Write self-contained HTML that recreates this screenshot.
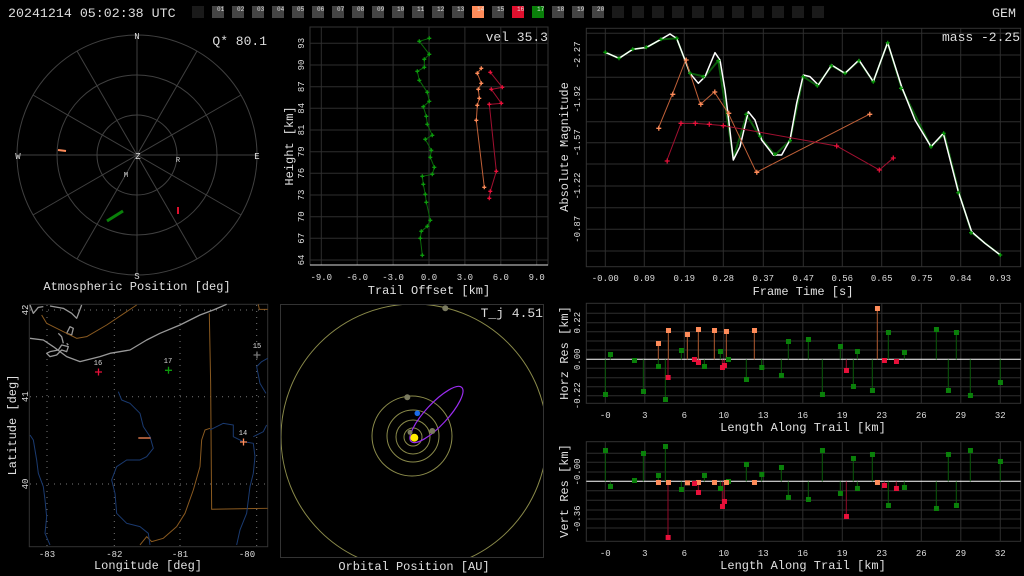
<!DOCTYPE html>
<html><head><meta charset="utf-8"><style>
html,body{margin:0;padding:0;background:#000;width:1024px;height:576px;overflow:hidden}
svg{display:block}
text{font-family:"Liberation Mono",monospace;fill:#ddd}
.t{font-size:9px;fill:#bbb}
.ti{font-size:12px;fill:#e0e0e0}
.g{stroke:#2e2e2e;stroke-width:1;fill:none}
.f{stroke:#333;stroke-width:1;fill:none}
.n *{vector-effect:non-scaling-stroke;stroke-linejoin:round}
</style></head><body>
<svg width="1024" height="576" viewBox="0 0 1024 576" xmlns="http://www.w3.org/2000/svg">
<rect width="1024" height="576" fill="#000"/>
<!-- header -->
<text x="8" y="17" style="font-size:13.3px" fill="#e0e0e0">20241214 05:02:38 UTC</text>
<text x="992" y="17" style="font-size:13.3px" fill="#e0e0e0">GEM</text>
<g>
<rect x="192" y="6" width="12" height="12" fill="#1a1a1a"/>
<rect x="212" y="6" width="12" height="12" fill="#444"/><rect x="232" y="6" width="12" height="12" fill="#444"/><rect x="252" y="6" width="12" height="12" fill="#444"/><rect x="272" y="6" width="12" height="12" fill="#444"/><rect x="292" y="6" width="12" height="12" fill="#444"/><rect x="312" y="6" width="12" height="12" fill="#444"/><rect x="332" y="6" width="12" height="12" fill="#444"/><rect x="352" y="6" width="12" height="12" fill="#444"/><rect x="372" y="6" width="12" height="12" fill="#444"/><rect x="392" y="6" width="12" height="12" fill="#444"/><rect x="412" y="6" width="12" height="12" fill="#444"/><rect x="432" y="6" width="12" height="12" fill="#444"/><rect x="452" y="6" width="12" height="12" fill="#444"/>
<rect x="472" y="6" width="12" height="12" fill="#ff8c5a"/>
<rect x="492" y="6" width="12" height="12" fill="#444"/>
<rect x="512" y="6" width="12" height="12" fill="#e0102e"/>
<rect x="532" y="6" width="12" height="12" fill="#0a800a"/>
<rect x="552" y="6" width="12" height="12" fill="#444"/><rect x="572" y="6" width="12" height="12" fill="#444"/><rect x="592" y="6" width="12" height="12" fill="#444"/>
<rect x="612" y="6" width="12" height="12" fill="#1a1a1a"/><rect x="632" y="6" width="12" height="12" fill="#1a1a1a"/><rect x="652" y="6" width="12" height="12" fill="#1a1a1a"/><rect x="672" y="6" width="12" height="12" fill="#1a1a1a"/><rect x="692" y="6" width="12" height="12" fill="#1a1a1a"/><rect x="712" y="6" width="12" height="12" fill="#1a1a1a"/><rect x="732" y="6" width="12" height="12" fill="#1a1a1a"/><rect x="752" y="6" width="12" height="12" fill="#1a1a1a"/><rect x="772" y="6" width="12" height="12" fill="#1a1a1a"/><rect x="792" y="6" width="12" height="12" fill="#1a1a1a"/><rect x="812" y="6" width="12" height="12" fill="#1a1a1a"/>
</g>
<g style="font-size:6px" fill="#ccc">
<text x="217" y="11">01</text><text x="237" y="11">02</text><text x="257" y="11">03</text><text x="277" y="11">04</text><text x="297" y="11">05</text><text x="317" y="11">06</text><text x="337" y="11">07</text><text x="357" y="11">08</text><text x="377" y="11">09</text><text x="397" y="11">10</text><text x="417" y="11">11</text><text x="437" y="11">12</text><text x="457" y="11">13</text><text x="477" y="11" fill="#fff">14</text><text x="497" y="11">15</text><text x="517" y="11" fill="#fff">16</text><text x="537" y="11" fill="#fff">17</text><text x="557" y="11">18</text><text x="577" y="11">19</text><text x="597" y="11">20</text>
</g>

<!-- Panel 1 polar -->
<g stroke="#404040" fill="none" stroke-width="1">
<circle cx="137" cy="155" r="40"/><circle cx="137" cy="155" r="80"/><circle cx="137" cy="155" r="120"/>
<line x1="137" y1="35" x2="137" y2="275"/><line x1="17" y1="155" x2="257" y2="155"/>
<line x1="77" y1="51" x2="197" y2="259"/><line x1="197" y1="51" x2="77" y2="259"/>
<line x1="33" y1="95" x2="241" y2="215"/><line x1="33" y1="215" x2="241" y2="95"/>
</g>
<g style="font-size:9px" fill="#ccc" text-anchor="middle">
<text x="137" y="39">N</text><text x="137" y="279">S</text><text x="18" y="159">W</text><text x="257" y="159">E</text><text x="138" y="159">Z</text>
<text x="178" y="162" style="font-size:7px" fill="#fff">R</text><text x="126" y="177" style="font-size:7px" fill="#fff">M</text>
</g>
<text x="267" y="45" text-anchor="end" style="font-size:13px" fill="#e0e0e0">Q* 80.1</text>
<line x1="58" y1="150" x2="66" y2="151" stroke="#ff8c5a" stroke-width="2"/>
<line x1="107" y1="221" x2="123" y2="211" stroke="#0a800a" stroke-width="3"/>
<line x1="178" y1="207" x2="178" y2="214" stroke="#e0102e" stroke-width="2"/>
<text x="137" y="290" text-anchor="middle" class="ti">Atmospheric Position [deg]</text>

<!-- Panel 2 trail -->
<rect x="310" y="27" width="238" height="238" fill="none" stroke="#333"/>
<g class="g">
<line x1="321.3" y1="27" x2="321.3" y2="265"/><line x1="357.2" y1="27" x2="357.2" y2="265"/><line x1="393.1" y1="27" x2="393.1" y2="265"/><line x1="429" y1="27" x2="429" y2="265"/><line x1="464.9" y1="27" x2="464.9" y2="265"/><line x1="500.8" y1="27" x2="500.8" y2="265"/><line x1="536.7" y1="27" x2="536.7" y2="265"/>
<line x1="310" y1="43.3" x2="548" y2="43.3"/><line x1="310" y1="65" x2="548" y2="65"/><line x1="310" y1="86.7" x2="548" y2="86.7"/><line x1="310" y1="108.3" x2="548" y2="108.3"/><line x1="310" y1="130" x2="548" y2="130"/><line x1="310" y1="151.7" x2="548" y2="151.7"/><line x1="310" y1="173.3" x2="548" y2="173.3"/><line x1="310" y1="195" x2="548" y2="195"/><line x1="310" y1="216.7" x2="548" y2="216.7"/><line x1="310" y1="238.3" x2="548" y2="238.3"/><line x1="310" y1="260" x2="548" y2="260"/>
</g>
<line x1="310" y1="265" x2="548" y2="265" stroke="#ddd"/>
<g class="n" transform="translate(280,20) scale(0.3333)" fill="none" stroke-width="1">
<polyline stroke="#0a6a0a" points="448,55 418,64 448,103 433,118 433,142 412,154 418,181 442,217 448,244 430,260 439,289 442,313 457,346 436,358 454,391 451,412 463,442 457,463 427,469 430,493 436,523 439,547 451,601 442,619 424,634 421,655 427,706"/>
<polyline stroke="#c06038" points="604,145 592,160 604,190 595,208 598,235 592,256 589,301 613,502"/>
<polyline stroke="#a01030" points="631,157 667,202 634,208 664,250 628,253 649,454 631,514 628,535"/>
</g>
<g stroke-width="1.3">
<path stroke="#0c9a0c" d="M427.3,38.3h4m-2,-2v4 M417.3,41.3h4m-2,-2v4 M427.3,54.3h4m-2,-2v4 M422.3,59.3h4m-2,-2v4 M422.3,67.3h4m-2,-2v4 M415.3,71.3h4m-2,-2v4 M417.3,80.3h4m-2,-2v4 M425.3,92.3h4m-2,-2v4 M427.3,101.3h4m-2,-2v4 M421.3,106.7h4m-2,-2v4 M424.3,116.3h4m-2,-2v4 M425.3,124.3h4m-2,-2v4 M430.3,135.3h4m-2,-2v4 M423.3,139.3h4m-2,-2v4 M429.3,150.3h4m-2,-2v4 M428.3,157.3h4m-2,-2v4 M432.3,167.3h4m-2,-2v4 M430.3,174.3h4m-2,-2v4 M420.3,176.3h4m-2,-2v4 M421.3,184.3h4m-2,-2v4 M423.3,194.3h4m-2,-2v4 M424.3,202.3h4m-2,-2v4 M428.3,220.3h4m-2,-2v4 M425.3,226.3h4m-2,-2v4 M419.3,231.3h4m-2,-2v4 M418.3,238.3h4m-2,-2v4 M420.3,255.3h4m-2,-2v4"/>
<path stroke="#ff8c5a" d="M479.3,68.3h4m-2,-2v4 M475.3,73.3h4m-2,-2v4 M479.3,83.3h4m-2,-2v4 M476.3,89.3h4m-2,-2v4 M477.3,98.3h4m-2,-2v4 M475.3,105.3h4m-2,-2v4 M474.3,120.3h4m-2,-2v4 M482.3,187.3h4m-2,-2v4"/>
<path stroke="#e8103a" d="M488.3,72.3h4m-2,-2v4 M500.3,87.3h4m-2,-2v4 M489.3,89.3h4m-2,-2v4 M499.3,103.3h4m-2,-2v4 M487.3,104.3h4m-2,-2v4 M494.3,171.3h4m-2,-2v4 M488.3,191.3h4m-2,-2v4 M487.3,198.3h4m-2,-2v4"/>
</g>
<text x="548" y="41" text-anchor="end" style="font-size:13px" fill="#e0e0e0">vel 35.3</text>
<g class="t" text-anchor="middle">
<text x="321.3" y="280">-9.0</text><text x="357.2" y="280">-6.0</text><text x="393.1" y="280">-3.0</text><text x="429" y="280">0.0</text><text x="464.9" y="280">3.0</text><text x="500.8" y="280">6.0</text><text x="536.7" y="280">9.0</text>
<text transform="translate(304,43.3) rotate(-90)">93</text><text transform="translate(304,65) rotate(-90)">90</text><text transform="translate(304,86.7) rotate(-90)">87</text><text transform="translate(304,108.3) rotate(-90)">84</text><text transform="translate(304,130) rotate(-90)">81</text><text transform="translate(304,151.7) rotate(-90)">79</text><text transform="translate(304,173.3) rotate(-90)">76</text><text transform="translate(304,195) rotate(-90)">73</text><text transform="translate(304,216.7) rotate(-90)">70</text><text transform="translate(304,238.3) rotate(-90)">67</text><text transform="translate(304,260) rotate(-90)">64</text>
</g>
<text x="429" y="294" text-anchor="middle" class="ti">Trail Offset [km]</text>
<text transform="translate(293,146) rotate(-90)" text-anchor="middle" class="ti">Height [km]</text>

<!-- Panel 3 magnitude -->
<rect x="586.3" y="28.3" width="434.4" height="238.4" fill="none" stroke="#333"/>
<g class="g">
<line x1="605.3" y1="28.3" x2="605.3" y2="266.7"/><line x1="644.3" y1="28.3" x2="644.3" y2="266.7"/><line x1="684.3" y1="28.3" x2="684.3" y2="266.7"/><line x1="723.3" y1="28.3" x2="723.3" y2="266.7"/><line x1="763.3" y1="28.3" x2="763.3" y2="266.7"/><line x1="803.3" y1="28.3" x2="803.3" y2="266.7"/><line x1="842.3" y1="28.3" x2="842.3" y2="266.7"/><line x1="881.7" y1="28.3" x2="881.7" y2="266.7"/><line x1="921.7" y1="28.3" x2="921.7" y2="266.7"/><line x1="960.7" y1="28.3" x2="960.7" y2="266.7"/><line x1="1000.3" y1="28.3" x2="1000.3" y2="266.7"/>
<line x1="586.3" y1="33.3" x2="1020.7" y2="33.3"/><line x1="586.3" y1="55" x2="1020.7" y2="55"/><line x1="586.3" y1="77.3" x2="1020.7" y2="77.3"/><line x1="586.3" y1="99.3" x2="1020.7" y2="99.3"/><line x1="586.3" y1="121.7" x2="1020.7" y2="121.7"/><line x1="586.3" y1="142.7" x2="1020.7" y2="142.7"/><line x1="586.3" y1="164" x2="1020.7" y2="164"/><line x1="586.3" y1="186" x2="1020.7" y2="186"/><line x1="586.3" y1="207.7" x2="1020.7" y2="207.7"/><line x1="586.3" y1="229.3" x2="1020.7" y2="229.3"/><line x1="586.3" y1="251" x2="1020.7" y2="251"/>
</g>
<g class="n" transform="translate(555,20) scale(0.3333)" fill="none">
<polyline stroke="#0a5a0a" stroke-width="2" points="151,97 192,115 233,88 275,82 318,58 365,55 405,160 450,170 490,122 535,415 575,285 615,350 660,405 705,362 745,170 787,197 830,137 870,160 912,122 955,185 998,68 1040,205 1128,380 1168,342 1212,518 1250,638 1336,705"/>
<polyline stroke="#fff" stroke-width="1.5" points="151,97 192,115 233,88 275,82 318,58 345,42 365,55 390,120 405,160 430,190 450,170 480,98 495,120 510,210 520,290 535,420 555,380 580,275 600,300 620,360 655,405 680,405 705,360 725,250 745,165 765,170 790,195 830,135 870,160 912,120 955,185 975,130 998,68 1040,200 1080,300 1128,380 1165,340 1210,515 1250,635 1290,670 1336,705"/>
<polyline stroke="#c06038" stroke-width="1" points="310,325 352,223 392,120 436,253 478,216 520,280 604,457 943,283"/>
<polyline stroke="#a01030" stroke-width="1" points="335,423 378,310 421,310 463,313 505,317 845,378 973,450 1015,414"/>
</g>
<g stroke-width="1.3">
<path stroke="#ff8c5a" d="M656.3,128.3h5m-2.5,-2.5v5 M670.3,94.3h5m-2.5,-2.5v5 M683.7,60h5m-2.5,-2.5v5 M698.3,104.3h5m-2.5,-2.5v5 M712.3,92h5m-2.5,-2.5v5 M726.3,113.3h5m-2.5,-2.5v5 M754.3,172.3h5m-2.5,-2.5v5 M867.3,114.3h5m-2.5,-2.5v5"/>
<path stroke="#e8103a" d="M664.7,161h5m-2.5,-2.5v5 M678.5,123.3h5m-2.5,-2.5v5 M692.8,123.3h5m-2.5,-2.5v5 M706.8,124.3h5m-2.5,-2.5v5 M720.8,125.7h5m-2.5,-2.5v5 M834.2,146h5m-2.5,-2.5v5 M876.8,170h5m-2.5,-2.5v5 M890.8,158h5m-2.5,-2.5v5"/>
<path stroke="#0c9a0c" d="M603.3,52.3h4m-2,-2v4 M617,58.3h4m-2,-2v4 M630.7,49.3h4m-2,-2v4 M644.3,47.3h4m-2,-2v4 M659,39.3h4m-2,-2v4 M674.7,38.3h4m-2,-2v4 M688,73.3h4m-2,-2v4 M701.3,76.7h4m-2,-2v4 M716.3,60.7h4m-2,-2v4 M744.3,114.3h4m-2,-2v4 M758.3,136.3h4m-2,-2v4 M773,154.3h4m-2,-2v4 M788,140.7h4m-2,-2v4 M801.3,76.7h4m-2,-2v4 M815.3,85.7h4m-2,-2v4 M829.3,65.7h4m-2,-2v4 M843,73.3h4m-2,-2v4 M857,60.7h4m-2,-2v4 M871.3,81.7h4m-2,-2v4 M885.7,42.7h4m-2,-2v4 M899,88.3h4m-2,-2v4 M929,146.7h4m-2,-2v4 M941.7,133.3h4m-2,-2v4 M956.3,192.7h4m-2,-2v4 M969,232.7h4m-2,-2v4 M998.3,255h4m-2,-2v4"/>
</g>
<text x="1020" y="41" text-anchor="end" style="font-size:13px" fill="#e0e0e0">mass -2.25</text>
<g class="t" text-anchor="middle">
<text x="605.3" y="281">-0.00</text><text x="644.3" y="281">0.09</text><text x="684.3" y="281">0.19</text><text x="723.3" y="281">0.28</text><text x="763.3" y="281">0.37</text><text x="803.3" y="281">0.47</text><text x="842.3" y="281">0.56</text><text x="881.7" y="281">0.65</text><text x="921.7" y="281">0.75</text><text x="960.7" y="281">0.84</text><text x="1000.3" y="281">0.93</text>
<text transform="translate(580,55) rotate(-90)">-2.27</text><text transform="translate(580,99.3) rotate(-90)">-1.92</text><text transform="translate(580,142.7) rotate(-90)">-1.57</text><text transform="translate(580,186) rotate(-90)">-1.22</text><text transform="translate(580,229.3) rotate(-90)">-0.87</text>
</g>
<text x="803" y="295" text-anchor="middle" class="ti">Frame Time [s]</text>
<text transform="translate(568,147) rotate(-90)" text-anchor="middle" class="ti">Absolute Magnitude</text>

<!-- Panel 4 map -->
<rect x="29.3" y="304.3" width="238.4" height="242.4" fill="none" stroke="#333"/>
<g stroke="#777" stroke-dasharray="1,5" stroke-width="1">
<line x1="47" y1="305" x2="47" y2="546"/><line x1="114.3" y1="305" x2="114.3" y2="546"/><line x1="180" y1="305" x2="180" y2="546"/><line x1="256.7" y1="305" x2="256.7" y2="546"/>
<line x1="30" y1="310" x2="267" y2="310"/><line x1="30" y1="396.7" x2="267" y2="396.7"/><line x1="30" y1="484" x2="267" y2="484"/>
</g>
<g class="n" transform="translate(0,300) scale(0.3333)" fill="none" stroke-width="1">
<path stroke="#999" stroke-width="1.3" d="M90,115 L130,120 160,140 200,170 240,185 300,170 330,160 390,150 440,120 480,100 540,75 600,45 640,30 680,13 M90,15 L100,40 115,22 130,20 M150,18 L190,25 215,40 230,55 245,15 M140,160 L150,170 170,165 185,150 200,155 205,140 185,135 175,150 150,155 Z M200,100 L210,80 220,85 215,105 Z M175,100 L185,110 190,130 M200,130 L205,135"/>
<path stroke="#8a5a20" d="M125,45 L140,70 230,115 260,110 320,75 410,15 M628,40 L632,250 635,628 803,625 M775,13 L778,28 803,28 M420,735 L440,710 455,725 490,715 530,680 555,640 580,570 600,500 605,420 615,390 630,385"/>
<path stroke="#1a3a70" d="M355,275 L365,300 390,310 420,340 430,380 450,410 460,445 440,470 420,480 380,480 350,500 335,540 345,580 350,640 380,670 420,680 445,700 450,735 M90,405 L100,420 110,480 115,520 130,560 135,600 140,650 135,700 150,735 M803,175 L785,185 770,200 780,250 798,280 M630,390 L670,370 700,375 700,410 730,425 760,430 765,470 760,520 750,560 745,600 740,640 720,690 710,735 M800,375 L790,395 760,410"/>
</g>
<g stroke-width="1.3">
<path stroke="#e8103a" d="M95,372h7m-3.5,-3.5v7"/>
<path stroke="#0c9a0c" d="M165,370.3h7m-3.5,-3.5v7"/>
<path stroke="#777" d="M253.5,355h7m-3.5,-3.5v7"/>
<path stroke="#ff8c5a" d="M240,442h7m-3.5,-3.5v7 M138.3,438h12.3"/>
</g>
<g style="font-size:7px" fill="#aaa" text-anchor="middle">
<text x="98" y="365">16</text><text x="168" y="363">17</text><text x="257" y="348">15</text><text x="243" y="435">14</text>
</g>
<g class="t" text-anchor="middle">
<text x="47" y="557">-83</text><text x="114.3" y="557">-82</text><text x="180" y="557">-81</text><text x="247" y="557">-80</text>
<text transform="translate(28,310) rotate(-90)">42</text><text transform="translate(28,396.7) rotate(-90)">41</text><text transform="translate(28,484) rotate(-90)">40</text>
</g>
<text x="148" y="569" text-anchor="middle" class="ti">Longitude [deg]</text>
<text transform="translate(16,425) rotate(-90)" text-anchor="middle" class="ti">Latitude [deg]</text>

<!-- Panel 5 orbital -->
<rect x="280.5" y="304.5" width="263" height="253" fill="none" stroke="#333"/>
<clipPath id="oc"><rect x="281" y="305" width="262" height="252"/></clipPath>
<g clip-path="url(#oc)" fill="none" stroke="#8a8a4a" stroke-width="1">
<circle cx="413" cy="437" r="9"/><circle cx="413" cy="437" r="17"/><circle cx="413" cy="436" r="26"/><circle cx="412" cy="436" r="40"/><circle cx="414" cy="437" r="133"/>
</g>
<ellipse cx="436.5" cy="414.5" rx="37" ry="11" transform="rotate(-47 436.5 414.5)" fill="none" stroke="#9a2cf0" stroke-width="1.2"/>
<circle cx="407.3" cy="397.3" r="3" fill="#7a7a60"/><circle cx="432.3" cy="431" r="3" fill="#7a7a60"/><circle cx="410" cy="432.3" r="2.5" fill="#7a7a60"/><circle cx="445.3" cy="308.3" r="3" fill="#7a7a60"/>
<circle cx="417.3" cy="413.3" r="2.8" fill="#1a6ae8"/>
<circle cx="414.3" cy="437.7" r="4" fill="#ffee00"/>
<text x="543" y="317" text-anchor="end" style="font-size:13px" fill="#e0e0e0">T_j 4.51</text>
<text x="414" y="570" text-anchor="middle" class="ti">Orbital Position [AU]</text>

<!-- Panel 6 residuals -->
<rect x="586.3" y="303.3" width="434.4" height="100" fill="none" stroke="#333"/>
<rect x="586.3" y="441.7" width="434.4" height="99.6" fill="none" stroke="#333"/>
<g class="g">
<path d="M605.3,303.3V403.3M644.8,303.3V403.3M684.3,303.3V403.3M723.8,303.3V403.3M763.3,303.3V403.3M802.8,303.3V403.3M842.3,303.3V403.3M881.8,303.3V403.3M921.3,303.3V403.3M960.8,303.3V403.3M1000.3,303.3V403.3"/>
<path d="M586.3,313.3H1020.7M586.3,322.7H1020.7M586.3,331.7H1020.7M586.3,341H1020.7M586.3,350H1020.7M586.3,368.3H1020.7M586.3,377.7H1020.7M586.3,386.7H1020.7M586.3,395.7H1020.7"/>
<path d="M605.3,441.7V541.3M644.8,441.7V541.3M684.3,441.7V541.3M723.8,441.7V541.3M763.3,441.7V541.3M802.8,441.7V541.3M842.3,441.7V541.3M881.8,441.7V541.3M921.3,441.7V541.3M960.8,441.7V541.3M1000.3,441.7V541.3"/>
<path d="M586.3,453.3H1020.7M586.3,462.3H1020.7M586.3,472H1020.7M586.3,490.7H1020.7M586.3,500.3H1020.7M586.3,510H1020.7M586.3,519H1020.7M586.3,528H1020.7"/>
</g>
<line x1="586.3" y1="359.3" x2="1020.7" y2="359.3" stroke="#fff"/>
<line x1="586.3" y1="481.3" x2="1020.7" y2="481.3" stroke="#fff"/>
<g class="n" transform="translate(555,300) scale(0.3333)" stroke-width="1">
<path stroke="#0a5a0a" d="M151,178V283M166,178V163M238,178V181M265,178V274M310,178V199M331,178V298M379,178V151M448,178V199M496,178V154M574,178V238M620,178V202M679,178V226M700,178V124M760,178V118M802,178V283M856,178V139M895,178V259M907,178V154M952,178V271M1000,178V97M1048,178V157M1144,178V88M1180,178V271M1204,178V97M1246,178V286M1336,178V247"/>
<path stroke="#b05a30" d="M310,178V130M340,178V91M397,178V103M430,178V88M478,178V91M514,178V94M598,178V91M967,178V25"/>
<path stroke="#900a28" d="M339,178V232M430,178V187M502,178V202M508,178V196M874,178V211M988,178V181M1024,178V184"/>
<path stroke="#0a5a0a" d="M151,544V451M166,544V559M238,544V541M265,544V460M310,544V526M331,544V439M379,544V568M448,544V526M496,544V565M574,544V493M620,544V523M679,544V502M700,544V592M760,544V598M802,544V451M856,544V580M895,544V475M907,544V565M952,544V463M1000,544V616M1048,544V562M1144,544V625M1180,544V463M1204,544V616M1246,544V451M1336,544V484"/>
<path stroke="#900a28" d="M339,544V712M430,544V577M502,544V619M508,544V604M874,544V649M988,544V556M1024,544V565"/>
</g>
<g transform="translate(555,300) scale(0.3333)">
<g fill="#0a800a">
<rect x="144" y="276" width="15" height="15"/><rect x="159" y="156" width="15" height="15"/><rect x="231" y="174" width="15" height="15"/><rect x="258" y="267" width="15" height="15"/><rect x="303" y="192" width="15" height="15"/><rect x="324" y="291" width="15" height="15"/><rect x="372" y="144" width="15" height="15"/><rect x="441" y="192" width="15" height="15"/><rect x="489" y="147" width="15" height="15"/><rect x="513" y="171" width="15" height="15"/><rect x="567" y="231" width="15" height="15"/><rect x="613" y="195" width="15" height="15"/><rect x="672" y="219" width="15" height="15"/><rect x="693" y="117" width="15" height="15"/><rect x="753" y="111" width="15" height="15"/><rect x="795" y="276" width="15" height="15"/><rect x="849" y="132" width="15" height="15"/><rect x="888" y="252" width="15" height="15"/><rect x="900" y="147" width="15" height="15"/><rect x="945" y="264" width="15" height="15"/><rect x="993" y="90" width="15" height="15"/><rect x="1041" y="150" width="15" height="15"/><rect x="1137" y="81" width="15" height="15"/><rect x="1173" y="264" width="15" height="15"/><rect x="1197" y="90" width="15" height="15"/><rect x="1239" y="279" width="15" height="15"/><rect x="1329" y="240" width="15" height="15"/>
<rect x="144" y="444" width="15" height="15"/><rect x="159" y="552" width="15" height="15"/><rect x="231" y="534" width="15" height="15"/><rect x="258" y="453" width="15" height="15"/><rect x="303" y="519" width="15" height="15"/><rect x="324" y="432" width="15" height="15"/><rect x="372" y="561" width="15" height="15"/><rect x="441" y="519" width="15" height="15"/><rect x="489" y="558" width="15" height="15"/><rect x="513" y="537" width="15" height="15"/><rect x="567" y="486" width="15" height="15"/><rect x="613" y="516" width="15" height="15"/><rect x="672" y="495" width="15" height="15"/><rect x="693" y="585" width="15" height="15"/><rect x="753" y="591" width="15" height="15"/><rect x="795" y="444" width="15" height="15"/><rect x="849" y="573" width="15" height="15"/><rect x="888" y="468" width="15" height="15"/><rect x="900" y="558" width="15" height="15"/><rect x="945" y="456" width="15" height="15"/><rect x="993" y="609" width="15" height="15"/><rect x="1041" y="555" width="15" height="15"/><rect x="1137" y="618" width="15" height="15"/><rect x="1173" y="456" width="15" height="15"/><rect x="1197" y="609" width="15" height="15"/><rect x="1239" y="444" width="15" height="15"/><rect x="1329" y="477" width="15" height="15"/>
</g>
<g fill="#ff8c5a">
<rect x="303" y="123" width="15" height="15"/><rect x="333" y="84" width="15" height="15"/><rect x="390" y="96" width="15" height="15"/><rect x="423" y="81" width="15" height="15"/><rect x="471" y="84" width="15" height="15"/><rect x="507" y="87" width="15" height="15"/><rect x="591" y="84" width="15" height="15"/><rect x="960" y="18" width="15" height="15"/>
<rect x="303" y="540" width="15" height="15"/><rect x="333" y="540" width="15" height="15"/><rect x="390" y="541" width="15" height="15"/><rect x="423" y="540" width="15" height="15"/><rect x="471" y="540" width="15" height="15"/><rect x="507" y="540" width="15" height="15"/><rect x="591" y="540" width="15" height="15"/><rect x="960" y="540" width="15" height="15"/>
</g>
<g fill="#e8103a">
<rect x="332" y="225" width="15" height="15"/><rect x="411" y="171" width="15" height="15"/><rect x="423" y="180" width="15" height="15"/><rect x="495" y="195" width="15" height="15"/><rect x="501" y="189" width="15" height="15"/><rect x="867" y="204" width="15" height="15"/><rect x="981" y="174" width="15" height="15"/><rect x="1017" y="177" width="15" height="15"/>
<rect x="332" y="705" width="15" height="15"/><rect x="411" y="543" width="15" height="15"/><rect x="423" y="570" width="15" height="15"/><rect x="495" y="612" width="15" height="15"/><rect x="501" y="597" width="15" height="15"/><rect x="867" y="642" width="15" height="15"/><rect x="981" y="549" width="15" height="15"/><rect x="1017" y="558" width="15" height="15"/>
</g>
</g>
<g class="t" text-anchor="middle">
<text x="605.3" y="418">-0</text><text x="644.8" y="418">3</text><text x="684.3" y="418">6</text><text x="723.8" y="418">10</text><text x="763.3" y="418">13</text><text x="802.8" y="418">16</text><text x="842.3" y="418">19</text><text x="881.8" y="418">23</text><text x="921.3" y="418">26</text><text x="960.8" y="418">29</text><text x="1000.3" y="418">32</text>
<text x="605.3" y="556">-0</text><text x="644.8" y="556">3</text><text x="684.3" y="556">6</text><text x="723.8" y="556">10</text><text x="763.3" y="556">13</text><text x="802.8" y="556">16</text><text x="842.3" y="556">19</text><text x="881.8" y="556">23</text><text x="921.3" y="556">26</text><text x="960.8" y="556">29</text><text x="1000.3" y="556">32</text>
<text transform="translate(580,322.7) rotate(-90)">0.22</text><text transform="translate(580,359.3) rotate(-90)">0.00</text><text transform="translate(580,395.7) rotate(-90)">-0.22</text>
<text transform="translate(580,472) rotate(-90)">-0.00</text><text transform="translate(580,519) rotate(-90)">-0.36</text>
</g>
<text x="803" y="431" text-anchor="middle" class="ti">Length Along Trail [km]</text>
<text x="803" y="569" text-anchor="middle" class="ti">Length Along Trail [km]</text>
<text transform="translate(568,353) rotate(-90)" text-anchor="middle" class="ti">Horz Res [km]</text>
<text transform="translate(568,491) rotate(-90)" text-anchor="middle" class="ti">Vert Res [km]</text>
</svg>
</body></html>
